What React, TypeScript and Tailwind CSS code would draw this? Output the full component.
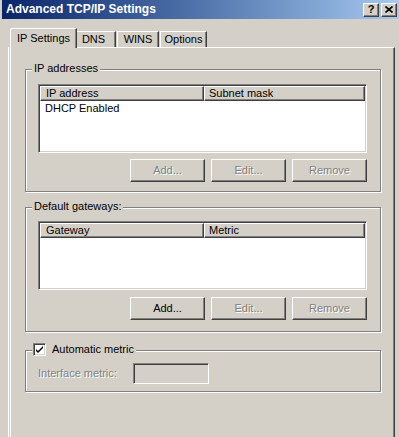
const raised =
  'border border-t-white border-l-white border-r-[#404040] border-b-[#404040] shadow-[inset_-1px_-1px_0_#808080]';
const sunken =
  'border border-t-[#808080] border-l-[#808080] border-r-white border-b-white shadow-[inset_1px_1px_0_#404040,inset_-1px_-1px_0_#d4d0c8]';
const etched = 'border border-[#808080] shadow-[inset_1px_1px_0_#fff,1px_1px_0_#fff]';
const disabledText = 'text-[#808080] [text-shadow:1px_1px_0_#fff]';

function Button({ label, disabled }: { label: string; disabled?: boolean }) {
  return (
    <div className={`w-[75px] h-[23px] flex items-center justify-center ${raised}`}>
      <span className={disabled ? disabledText : 'text-black'}>{label}</span>
    </div>
  );
}

function ListView({ cols, rows, height }: { cols: string[]; rows: string[]; height: string }) {
  return (
    <div className={`w-[329px] ${height} bg-white p-px ${sunken}`}>
      <div className="flex h-[15px] bg-[#d4d0c8]">
        <div className={`w-[164px] h-full px-[5px] flex items-center leading-[13px] ${raised}`}>{cols[0]}</div>
        <div className={`flex-1 h-full px-[4px] flex items-center leading-[13px] ${raised}`}>{cols[1]}</div>
      </div>
      {rows.map((r) => (
        <div key={r} className="h-[14px] pl-[5px] leading-[14px]">
          {r}
        </div>
      ))}
    </div>
  );
}

function GroupBox({ label, className, children }: { label: React.ReactNode; className: string; children: React.ReactNode }) {
  return (
    <div className={`relative w-[356px] ${etched} ${className}`}>
      <div className="absolute left-[6px] top-[-8px] px-[2px] bg-[#d4d0c8] leading-[13px]">{label}</div>
      {children}
    </div>
  );
}

export default function App() {
  return (
    <div className="w-[399px] h-[437px] overflow-hidden bg-[#d4d0c8] text-[11px] text-black font-['Liberation_Sans',Arial,sans-serif] flex flex-col">
      {/* caption */}
      <div className="ml-[2px] h-[19px] shrink-0 flex items-center pl-[4px] pr-[2px] bg-linear-to-r from-[#0a246a] to-[#a6caf0]">
        <span className="text-white font-bold text-[12px] leading-[19px]">Advanced TCP/IP Settings</span>
        <div className="ml-auto flex gap-[2px]">
          <div className={`w-[16px] h-[14px] bg-[#d4d0c8] flex items-center justify-center font-bold text-[11px] leading-none ${raised}`}>
            ?
          </div>
          <div className={`w-[16px] h-[14px] bg-[#d4d0c8] flex items-center justify-center ${raised}`}>
            <svg width="8" height="7" viewBox="0 0 8 7">
              <path d="M0.5 0.5 L7.5 6.5 M7.5 0.5 L0.5 6.5" stroke="#000" strokeWidth="1.6" />
            </svg>
          </div>
        </div>
      </div>

      <div className="flex-1 flex">
        <div className="w-[8px] shrink-0" />
        <div className="w-px bg-white mt-[28px]" />
        <div className="w-px shrink-0" />
        <div className="flex flex-col pt-[9px]">
          {/* tabs */}
          <div className="flex items-end h-[19px]">
            <div className="relative z-10 w-[67px] h-[20px] -mb-px bg-[#d4d0c8] border-t border-l border-white border-r border-r-[#404040] shadow-[inset_-1px_0_0_#808080] rounded-tl-[2px] flex justify-center pt-[3px] leading-[13px]">
              IP Settings
            </div>
            <div className="-ml-[6px] w-[45px] h-[16px] border-t border-l border-white border-r border-r-[#404040] shadow-[inset_-1px_0_0_#808080] flex justify-center pt-px leading-[13px]">
              DNS
            </div>
            <div className="ml-px w-[42px] h-[16px] border-t border-l border-white border-r border-r-[#404040] shadow-[inset_-1px_0_0_#808080] flex justify-center pt-px leading-[13px]">
              WINS
            </div>
            <div className="ml-px w-[47px] h-[16px] border-t border-l border-white border-r border-r-[#404040] shadow-[inset_-1px_0_0_#808080] flex justify-center pt-px leading-[13px]">
              Options
            </div>
          </div>

          {/* tab page */}
          <div className="w-[385px] flex-1 border-t border-l border-white border-r border-r-[#404040] shadow-[inset_-1px_0_0_#808080] pl-[14px] pt-[21px] flex flex-col">
            <GroupBox label="IP addresses" className="pl-[12px] pt-[14px] pb-[9px]">
              <ListView cols={['IP address', 'Subnet mask']} rows={['DHCP Enabled']} height="h-[69px]" />
              <div className="w-[329px] mt-[6px] flex justify-end gap-[6px]">
                <Button label="Add..." disabled />
                <Button label="Edit..." disabled />
                <Button label="Remove" disabled />
              </div>
            </GroupBox>

            <GroupBox label="Default gateways:" className="mt-[15px] pl-[12px] pt-[13px] pb-[11px]">
              <ListView cols={['Gateway', 'Metric']} rows={[]} height="h-[69px]" />
              <div className="w-[329px] mt-[7px] flex justify-end gap-[6px]">
                <Button label="Add..." />
                <Button label="Edit..." disabled />
                <Button label="Remove" disabled />
              </div>
            </GroupBox>

            <GroupBox
              className="mt-[18px] pl-[12px] pt-[12px] pb-[7px]"
              label={
                <div className="flex items-center gap-[6px] -ml-[1px]">
                  <div className={`w-[13px] h-[13px] bg-white flex items-center justify-center ${sunken}`}>
                    <svg width="7" height="7" viewBox="0 0 7 7">
                      <path d="M0 3 L0 5 L2 7 L7 2 L7 0 L2 5 Z" fill="#000" />
                    </svg>
                  </div>
                  <span>Automatic metric</span>
                </div>
              }
            >
              <div className="flex items-center">
                <span className={`w-[95px] ${disabledText}`}>Interface metric:</span>
                <div className={`w-[76px] h-[21px] bg-[#d4d0c8] ${sunken}`} />
              </div>
            </GroupBox>
          </div>
        </div>
      </div>
    </div>
  );
}
